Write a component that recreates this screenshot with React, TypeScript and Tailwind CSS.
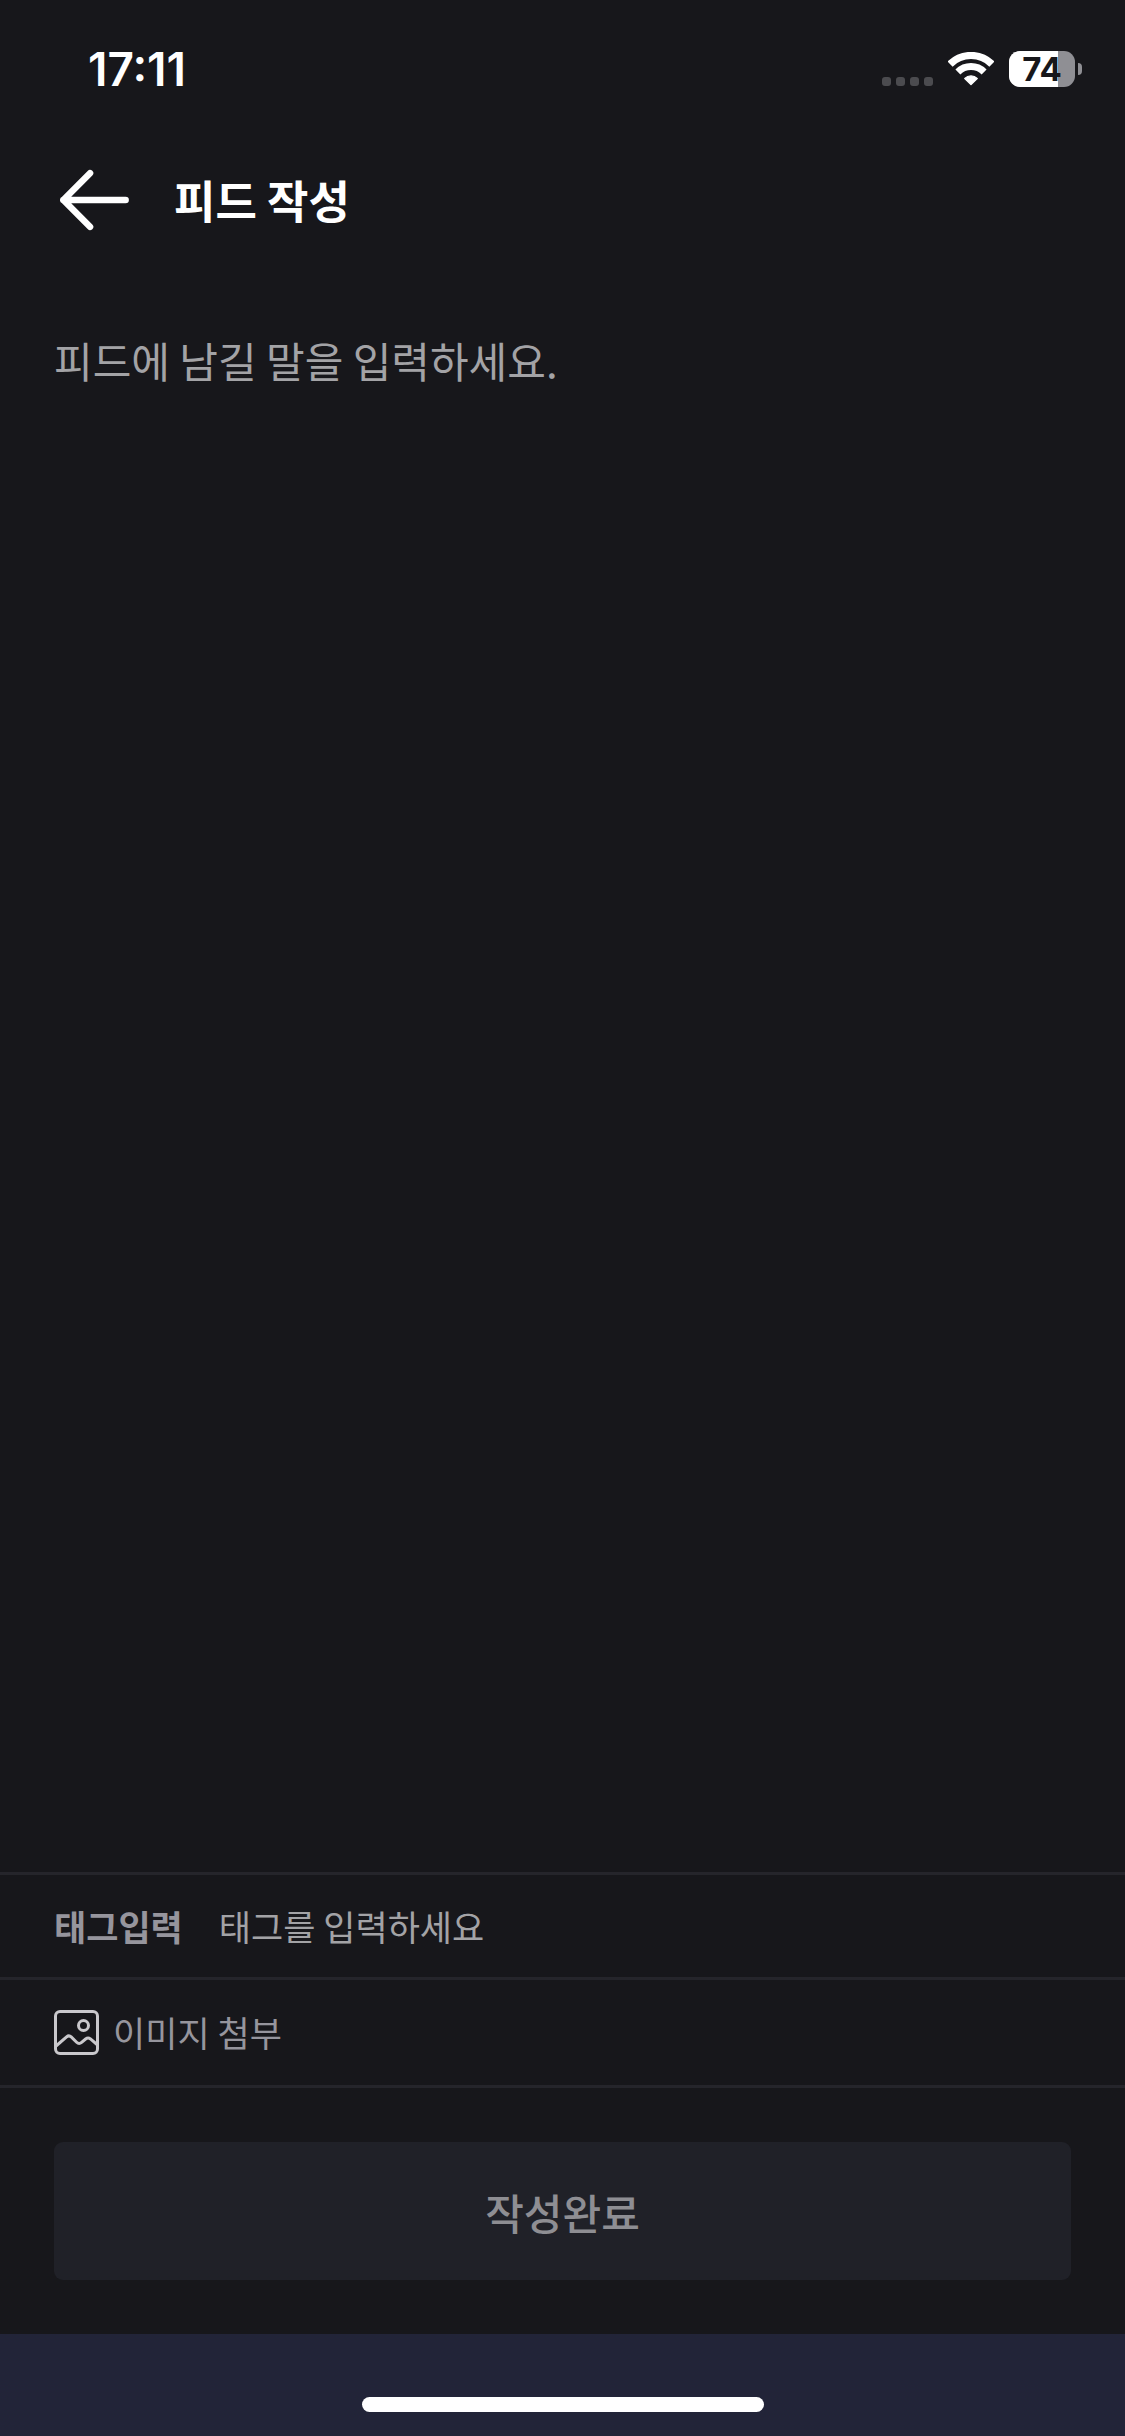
import React, { useState } from "react";

const SignalDots: React.FC = () => (
    <div className="flex gap-[5px] self-end">
        {[0, 1, 2, 3].map((dot) => (
            <span key={dot} className="size-[9px] rounded-[3px] bg-[#4b4b4f]" />
        ))}
    </div>
);

const WifiIcon: React.FC = () => (
    <svg width="46" height="34" viewBox="0 0 46 34" fill="none" stroke="#fff" aria-hidden="true">
        <path d="M2.1 12.1A29.6 29.6 0 0 1 43.9 12.1" strokeWidth="7.2" />
        <path d="M9.9 19.9A18.6 18.6 0 0 1 36.1 19.9" strokeWidth="7" />
        <path d="M23 32.4L16.8 26.4A9 9 0 0 1 29.2 26.4Z" fill="#fff" strokeWidth="1.4" strokeLinejoin="round" />
    </svg>
);

const Battery: React.FC<{ level: number }> = ({ level }) => (
    <div className="flex items-center gap-[3px]">
        <div className="relative flex h-9 w-[66px] items-center justify-center rounded-[11px] bg-[#8f8f94]">
            <div className="absolute inset-y-0 left-0 rounded-l-[11px] bg-white" style={{ width: `${level}%` }} />
            <span className="relative text-[33px] leading-9 font-bold text-[#17171b]">{level}</span>
        </div>
        <div className="h-3 w-1 rounded-r-full bg-[#8f8f94]" />
    </div>
);

const ArrowIcon: React.FC = () => (
    <svg width="72" height="66" viewBox="0 0 72 66" fill="none" stroke="#fff" strokeWidth="6.6" strokeLinecap="round" strokeLinejoin="round" aria-hidden="true">
        <path d="M33 6.2L6.4 33L33 59.8M6.4 33H68.6" />
    </svg>
);

const ImageIcon: React.FC = () => (
    <svg width="45" height="45" viewBox="0 0 45 45" fill="none" stroke="#c9c8cc" strokeWidth="3" aria-hidden="true">
        <rect x="1.5" y="1.5" width="42" height="42" rx="4.5" />
        <circle cx="29.5" cy="15.5" r="5" />
        <path d="M2 36L12.6 26.8Q15 24.8 17.2 26.9L22.6 32.2Q25 34.6 27.6 32.4L31.6 29Q34 27.2 36.5 28.9L43 34.5" />
    </svg>
);

const App: React.FC = () => {
    const [content, setContent] = useState("");
    const [tag, setTag] = useState("");

    return (
        <div className="flex min-h-screen flex-col bg-[#17171b] font-['Noto_Sans_CJK_KR',sans-serif] text-white">

            {/* STATUS BAR */}
            <div className="flex h-[138px] items-center justify-between pr-[43px] pl-[88px] font-['Inter',sans-serif]">
                <span className="text-[46px] leading-[52px] font-semibold">17:11</span>
                <div className="flex items-center">
                    <div className="flex items-center gap-[15px] pr-[15px]">
                        <SignalDots />
                        <WifiIcon />
                    </div>
                    <Battery level={74} />
                </div>
            </div>

            {/* HEADER */}
            <header className="flex h-[124px] items-center gap-[45px] px-[57px]">
                <button type="button" aria-label="뒤로" className="cursor-pointer">
                    <ArrowIcon />
                </button>
                <h1 className="text-[45px] leading-[60px] font-bold">피드 작성</h1>
            </header>

            {/* CONTENT */}
            <main className="flex grow flex-col px-[54px] pt-[68px]">
                <textarea
                    aria-label="피드 내용"
                    value={content}
                    onChange={(e) => setContent(e.target.value)}
                    placeholder="피드에 남길 말을 입력하세요."
                    className="w-full grow resize-none text-[42px] leading-[60px] outline-none placeholder:text-[#a3a3a6]"
                />
            </main>

            {/* FORM ROWS */}
            <div className="flex h-[105px] items-center gap-9 border-t-3 border-[#25252b] px-[54px] text-[35px]">
                <label htmlFor="tag" className="shrink-0 font-bold text-[#96959d]">태그입력</label>
                <input
                    id="tag"
                    type="text"
                    value={tag}
                    onChange={(e) => setTag(e.target.value)}
                    placeholder="태그를 입력하세요"
                    className="min-w-0 grow outline-none placeholder:text-[#a3a3a6]"
                />
            </div>
            <button type="button" className="flex h-[108px] cursor-pointer items-center gap-[14px] border-t-3 border-[#25252b] px-[54px] text-[35px] text-[#96959d]">
                <ImageIcon />
                이미지 첨부
            </button>

            {/* SUBMIT */}
            <div className="border-t-3 border-[#25252b] p-[54px]">
                <button type="submit" disabled className="h-[138px] w-full rounded-[9px] bg-[#202128] text-[42px] font-medium text-[#8e8e93]">
                    작성완료
                </button>
            </div>

            {/* HOME INDICATOR */}
            <div className="flex h-[102px] items-end justify-center bg-[#222438] pb-6">
                <div className="h-[15px] w-[402px] rounded-full bg-white" />
            </div>
        </div>
    );
};

export default App;
